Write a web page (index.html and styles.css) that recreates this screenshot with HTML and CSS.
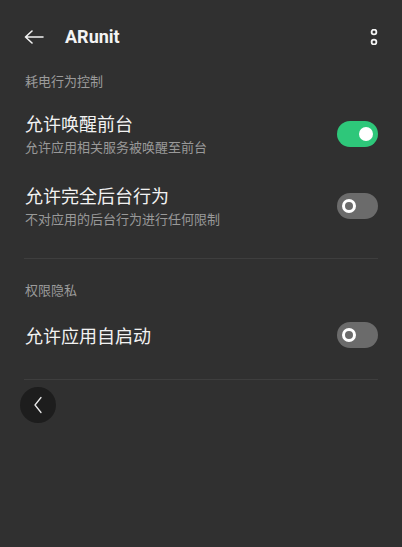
FILE: index.html
```html
<!DOCTYPE html>
<html lang="zh-CN">
<head>
    <meta charset="UTF-8">
    <meta name="viewport" content="width=device-width, initial-scale=1.0">
    <title>ARunit</title>
    <link rel="stylesheet" href="styles.css">
</head>
<body>
    <div id="top-bar">
        <svg class="back-arrow" width="20" height="14" viewBox="0 0 20 14">
            <path d="M1.5 7 H19 M8 1 L1.5 7 L8 13" fill="none" stroke="#f2f2f2" stroke-width="1.6" stroke-linecap="round" stroke-linejoin="round"/>
        </svg>
        <h1 id="app-name">ARunit</h1>
        <svg class="menu-dots" width="10" height="16" viewBox="0 0 10 16">
            <circle cx="5" cy="3" r="2.4" fill="none" stroke="#f2f2f2" stroke-width="1.8"/>
            <circle cx="5" cy="13" r="2.4" fill="none" stroke="#f2f2f2" stroke-width="1.8"/>
        </svg>
    </div>

    <div class="content">
        <p class="section-label">耗电行为控制</p>
        <div class="setting-row">
            <div class="setting-text">
                <div class="setting-title">允许唤醒前台</div>
                <div class="setting-desc">允许应用相关服务被唤醒至前台</div>
            </div>
            <div class="switch on"><span class="knob"></span></div>
        </div>
        <div class="setting-row">
            <div class="setting-text">
                <div class="setting-title">允许完全后台行为</div>
                <div class="setting-desc">不对应用的后台行为进行任何限制</div>
            </div>
            <div class="switch"><span class="knob"></span></div>
        </div>

        <div class="divider first"></div>

        <p class="section-label second">权限隐私</p>
        <div class="setting-row">
            <div class="setting-text">
                <div class="setting-title">允许应用自启动</div>
            </div>
            <div class="switch"><span class="knob"></span></div>
        </div>

        <div class="divider last"></div>
    </div>

    <!-- floating back button -->
    <div id="float-back">
        <svg width="10" height="18" viewBox="0 0 10 18">
            <path d="M8 1.5 L2 9 L8 16.5" fill="none" stroke="#e8e8e8" stroke-width="1.3" stroke-linecap="round" stroke-linejoin="round"/>
        </svg>
    </div>
</body>
</html>
```

FILE: styles.css
```css
body {
    margin: 0;
    background-color: #303030;
    color: #f2f2f2;
    font-family: "Noto Sans CJK SC", "Noto Sans", sans-serif;
    height: 547px;
    position: relative;
    overflow: hidden;
}

/* Header */
#top-bar {
    display: flex;
    align-items: center;
    height: 71px;
    padding: 3px 24px 0 24px;
    box-sizing: border-box;
}

.back-arrow {
    display: block;
}

#app-name {
    margin: 0 0 0 21px;
    flex: 1;
    font-family: Roboto, "Noto Sans", sans-serif;
    font-weight: 700;
    font-size: 18px;
    line-height: 24px;
    color: #f4f4f4;
}

.menu-dots {
    display: block;
    margin-right: -1px;
}

/* Settings list */
.content {
    padding: 0 24px;
}

.section-label {
    margin: 0;
    font-size: 13px;
    line-height: 20px;
    color: #9b9b9b;
    padding-left: 1px;
}

.section-label.second {
    margin-top: 21px;
}

.setting-row {
    display: flex;
    align-items: center;
    justify-content: space-between;
    padding: 14px 0 13px 1px;
}

.section-label + .setting-row {
    margin-top: 6px;
}

.section-label.second + .setting-row {
    margin-top: 8px;
}

.setting-title {
    font-size: 18px;
    line-height: 24px;
    color: #f2f2f2;
}

.setting-desc {
    margin-top: 3px;
    font-size: 13px;
    line-height: 18px;
    color: #999999;
}

/* Toggle switches */
.switch {
    width: 41px;
    height: 26px;
    border-radius: 13px;
    background-color: #6b6b6b;
    display: flex;
    align-items: center;
    padding: 0 5px;
    box-sizing: border-box;
}

.switch .knob {
    width: 14px;
    height: 14px;
    border-radius: 50%;
    box-sizing: border-box;
    border: 3px solid #ffffff;
    background-color: #6b6b6b;
}

.switch.on {
    background-color: #2ec77a;
    justify-content: flex-end;
}

.switch.on .knob {
    background-color: #ffffff;
    border: none;
}

.divider {
    height: 1px;
    background-color: #3e3e3e;
}

.divider.first {
    margin-top: 17px;
}

.divider.last {
    margin-top: 18px;
}

#float-back {
    position: absolute;
    left: 20px;
    top: 387px;
    width: 36px;
    height: 36px;
    border-radius: 50%;
    background-color: #1d1d1d;
    display: flex;
    align-items: center;
    justify-content: center;
}
```
